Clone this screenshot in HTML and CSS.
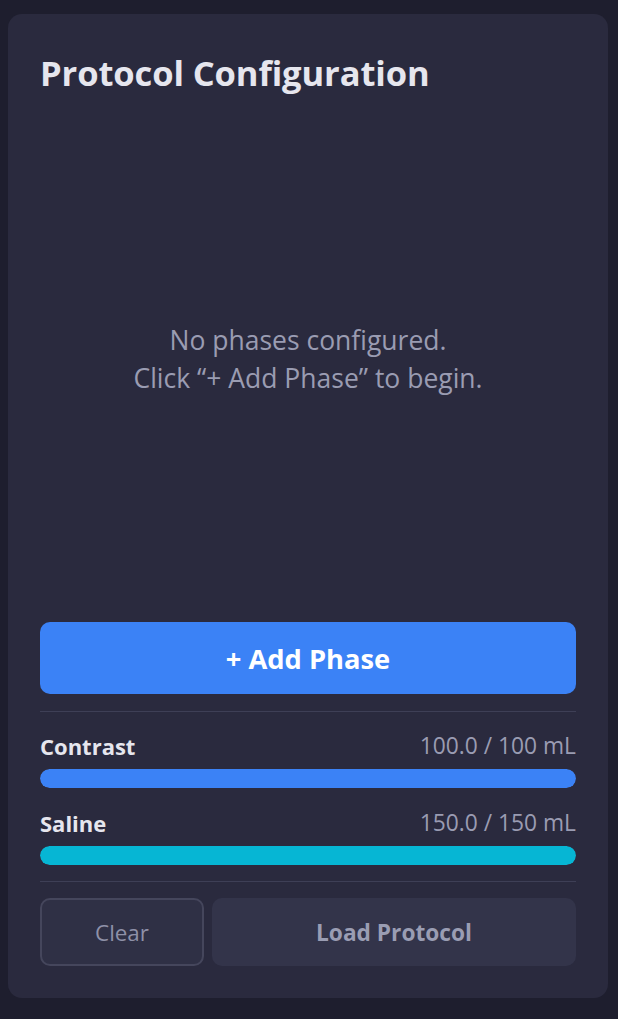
FILE: index.html
```html
<!DOCTYPE html>
<html lang="en">
<head>
<meta charset="utf-8">
<title>Protocol Configuration</title>
<link rel="stylesheet" href="styles.css">
</head>
<body>
<section class="card">
  <h2 class="title">Protocol Configuration</h2>
  <div class="empty">
    <p>No phases configured.<br>Click “+ Add Phase” to begin.</p>
  </div>
  <button class="btn-add" type="button">+ Add Phase</button>
  <div class="reservoirs">
    <div class="res">
      <div class="res-head"><span class="res-name">Contrast</span><span class="res-val">100.0 / 100 mL</span></div>
      <div class="bar"><div class="fill fill-contrast" style="width:100%"></div></div>
    </div>
    <div class="res">
      <div class="res-head"><span class="res-name">Saline</span><span class="res-val">150.0 / 150 mL</span></div>
      <div class="bar"><div class="fill fill-saline" style="width:100%"></div></div>
    </div>
  </div>
  <div class="actions">
    <button class="btn-clear" type="button">Clear</button>
    <button class="btn-load" type="button">Load Protocol</button>
  </div>
</section>
</body>
</html>
```

FILE: styles.css
```css
* { box-sizing: border-box; }
html, body { margin: 0; }
body {
  background: #1e1e2e;
  padding: 14px 10px 0 8px;
  font-family: "Open Sans", "Noto Sans", "Liberation Sans", sans-serif;
  color: #e4e4ec;
}
.card {
  width: 600px;
  height: 984px;
  background: #2a2a3e;
  border-radius: 14px;
  padding: 32px;
  display: flex;
  flex-direction: column;
}
.title {
  margin: 0;
  font-size: 34.5px;
  font-weight: 700;
  line-height: 54px;
  letter-spacing: -0.1px;
  color: #e6e6ee;
}
.empty {
  flex: 1;
  display: flex;
  align-items: center;
  justify-content: center;
  text-align: center;
  padding-bottom: 4px;
}
.empty p {
  margin: 0;
  font-size: 26.5px;
  line-height: 38px;
  color: #9a9cb2;
}
.btn-add {
  height: 72px;
  border: 0;
  border-radius: 10px;
  background: #3b82f6;
  color: #ffffff;
  font-family: inherit;
  font-size: 27.3px;
  font-weight: 700;
}
.reservoirs {
  margin-top: 17px;
  border-top: 1px solid #3e3f56;
  border-bottom: 1px solid #3e3f56;
  padding: 16px 0 16px;
  display: flex;
  flex-direction: column;
  gap: 17px;
}
.res-head {
  height: 32px;
  display: flex;
  justify-content: space-between;
  align-items: flex-end;
  margin-bottom: 9px;
}
.res-name {
  font-size: 22px;
  line-height: 28px;
  font-weight: 700;
  color: #e6e6ee;
}
.res-val {
  font-size: 22.8px;
  line-height: 28px;
  color: #9a9cb2;
}
.bar {
  height: 19px;
  border-radius: 10px;
  background: #3e3f56;
  overflow: hidden;
}
.fill { height: 100%; border-radius: 10px; }
.fill-contrast { background: #3b82f6; }
.fill-saline { background: #06b6d4; }
.actions {
  margin-top: 16px;
  display: flex;
  gap: 8px;
}
.actions button {
  height: 68px;
  border-radius: 10px;
  font-family: inherit;
}
.btn-clear {
  width: 164px;
  background: #2f3045;
  border: 2px solid #45465c;
  color: #8e91a8;
  font-size: 22.4px;
}
.btn-load {
  flex: 1;
  background: #33344a;
  border: 0;
  color: #9a9db3;
  font-weight: 700;
  font-size: 22.7px;
}
```
